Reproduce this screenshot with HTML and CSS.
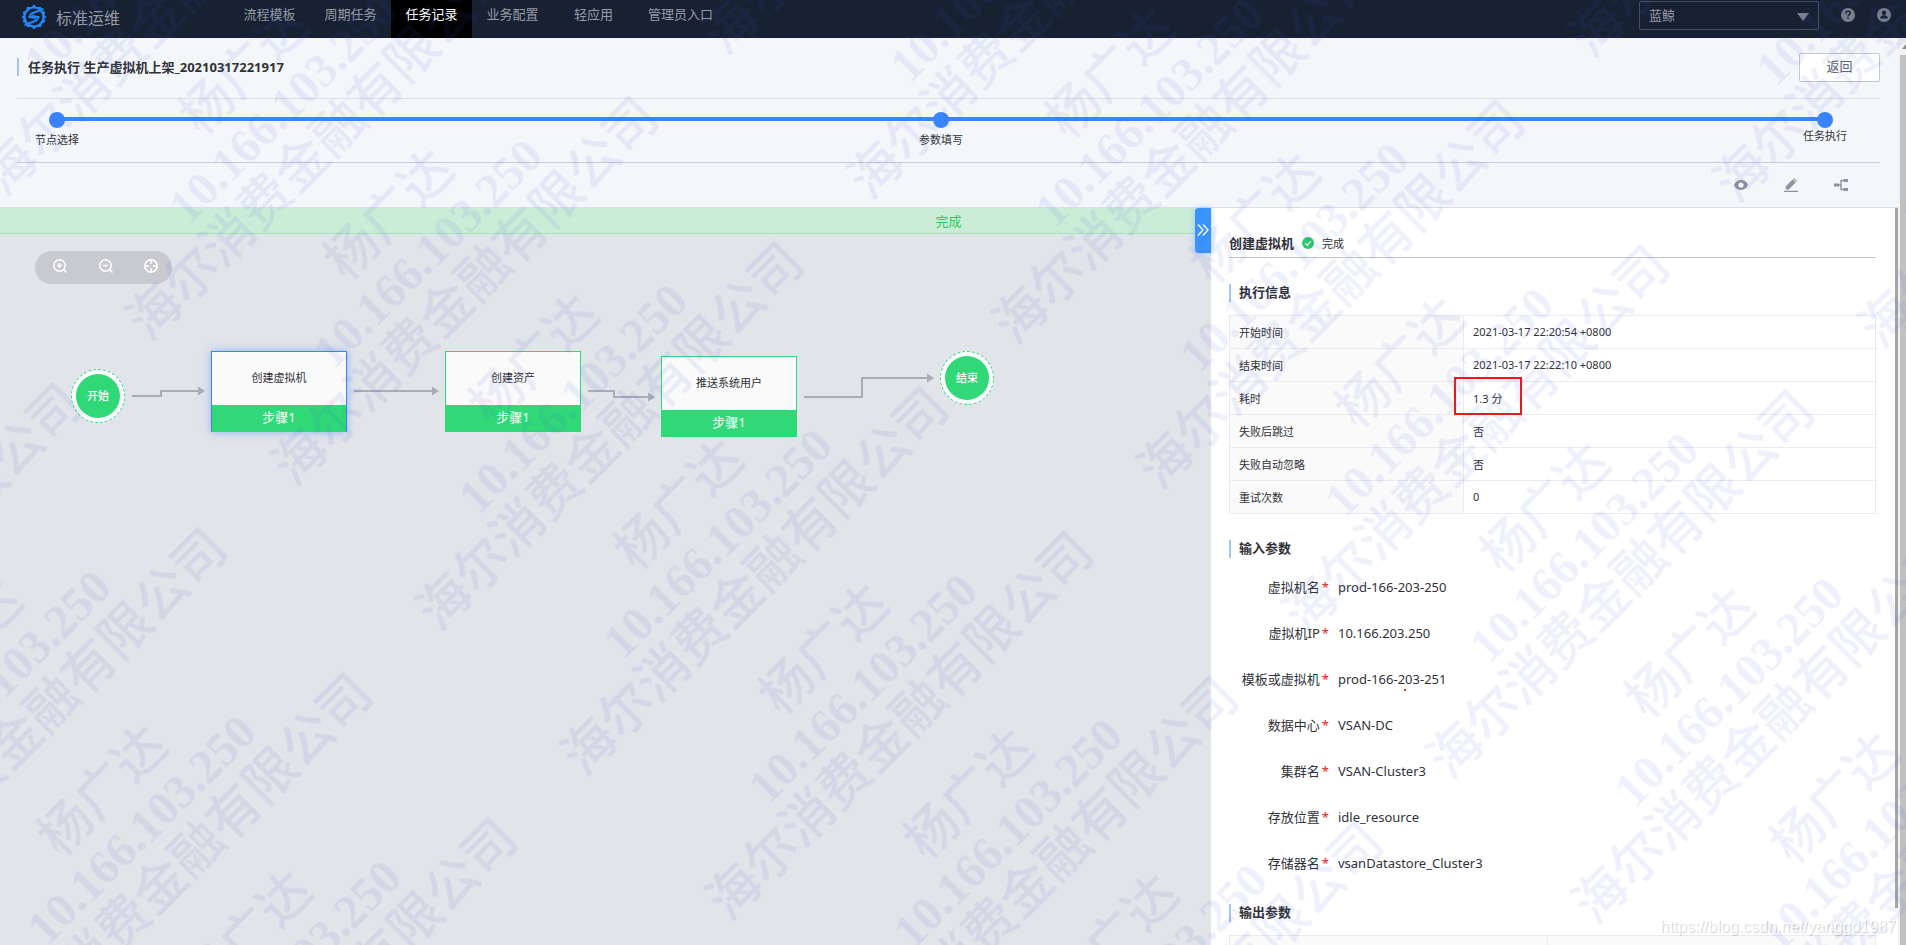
FILE: index.html
```html
<!DOCTYPE html>
<html lang="zh-CN">
<head>
<meta charset="utf-8">
<title>标准运维</title>
<link rel="stylesheet" href="styles.css">
</head>
<body>
<div class="app">
  <header class="topbar">
    <a class="brand" href="#">
      <svg class="brand-logo" viewBox="0 0 26 26" aria-hidden="true">
        <path d="M13 .5l2.600 2.600h4.400l1 3.400 3.200 1.500-.8 3.200L25.500 13l-2.100 1.800.8 3.200-3.200 1.500-1 3.400h-4.400L13 25.500l-2.600-2.600H6l-1-3.400L1.800 18l.8-3.200L.5 13l2.100-1.800L1.800 8 5 6.500l1-3.400h4.400z" fill="#2387f8"/>
        <circle cx="13" cy="13" r="8.400" fill="#182132"/>
        <path d="M22.500 5L10.500 9.500l-2.300 3.500 6 .8-1 1.400M3.500 21l12-4.500 2.300-3.500-6-.8 1-1.400" fill="none" stroke="#2387f8" stroke-width="1.900" stroke-linejoin="round"/>
      </svg>
      <span>标准运维</span>
    </a>
    <nav class="nav">
      <a href="#">流程模板</a>
      <a href="#">周期任务</a>
      <a href="#" class="is-active">任务记录</a>
      <a href="#">业务配置</a>
      <a href="#">轻应用</a>
      <a href="#">管理员入口</a>
    </nav>
    <div class="tools">
      <div class="picker">
        <select class="picker-select" aria-label="业务"><option>蓝鲸</option></select>
        <svg class="picker-arrow" viewBox="0 0 12 8" aria-hidden="true"><path d="M0 0h12L6 8z"/></svg>
      </div>
      <button class="icon-button" aria-label="帮助">
        <svg viewBox="0 0 14 14" width="14" height="14"><circle cx="7" cy="7" r="7" fill="#7b808c"/><path d="M4.900 5.400c0-3 4.300-2.800 4.300-.2C9.200 6.800 7 6.700 7 8.500M7 9.600v1.400" fill="none" stroke="#182132" stroke-width="1.500"/></svg>
      </button>
      <button class="icon-button" aria-label="用户">
        <svg viewBox="0 0 14 14" width="14" height="14"><circle cx="7" cy="7" r="7" fill="#7b808c"/><circle cx="7" cy="4.800" r="2.200" fill="#182132"/><path d="M3 10.500c0-2 2-2.800 2.800-3.200h2.400C9 7.700 11 8.500 11 10.500z" fill="#182132"/></svg>
      </button>
    </div>
  </header>

  <div class="page">
    <main class="content">
      <section class="head">
        <div class="title-row">
          <h1 class="page-title">任务执行 生产虚拟机上架_20210317221917</h1>
          <button class="back">返回</button>
        </div>
        <ol class="steps">
          <li class="step"><i class="dot"></i><span>节点选择</span></li>
          <li class="step"><i class="dot"></i><span>参数填写</span></li>
          <li class="step step-current"><i class="dot"></i><span>任务执行</span></li>
        </ol>
        <div class="actions">
          <button class="icon-button" aria-label="查看参数">
            <svg viewBox="0 0 14 12" width="14" height="12"><path fill-rule="evenodd" d="M7 1c3.600 0 6 2.500 7 5-1 2.500-3.400 5-7 5S1 8.500 0 6c1-2.500 3.400-5 7-5zm0 2.400a2.600 2.600 0 100 5.200 2.600 2.600 0 000-5.200z" fill="#8f939e"/></svg>
          </button>
          <button class="icon-button" aria-label="修改参数">
            <svg viewBox="0 0 14 14" width="14" height="14"><path d="M1.800 11.400V8.300L8.800 1.300l3 3-7 7.100zM9.500.7l.7-.7L13 2.900l-.7.8zM0 12.800h14V14H0z" fill="#8f939e"/></svg>
          </button>
          <button class="icon-button" aria-label="流程">
            <svg viewBox="0 0 14 12" width="14" height="12"><path d="M0 4.500h5v3H0zM9.500 0H14v3H9.500zM9.500 9H14v3H9.500z" fill="#8f939e"/><path d="M5 6h2M10 1.500H7v9h3" fill="none" stroke="#8f939e" stroke-width="1.400"/></svg>
          </button>
        </div>
      </section>

      <section class="work">
        <div class="stage">
          <div class="status">完成</div>
          <div class="canvas">
            <div class="zoombar">
              <button class="icon-button" aria-label="放大">
                <svg viewBox="0 0 14 14" width="14" height="14"><circle cx="6.500" cy="6.500" r="5.700"/><path d="M10.500 10.500l3 3M6.500 4v5M4 6.500h5"/></svg>
              </button>
              <button class="icon-button" aria-label="缩小">
                <svg viewBox="0 0 14 14" width="14" height="14"><circle cx="6.500" cy="6.500" r="5.700"/><path d="M10.500 10.500l3 3M4 6.500h5"/></svg>
              </button>
              <button class="icon-button" aria-label="复位">
                <svg viewBox="0 0 14 14" width="14" height="14"><circle cx="7" cy="7" r="6.200"/><path d="M7 1v4M7 9v4M1 7h4M9 7h4"/></svg>
              </button>
            </div>
            <svg class="links" aria-hidden="true">
              <defs>
                <marker id="tip" markerUnits="userSpaceOnUse" markerWidth="8" markerHeight="10" refX="1" refY="5" orient="auto"><path d="M0 .5L7 5 0 9.500z" fill="#a9adb6"/></marker>
              </defs>
              <path d="M132 162h29v-5h38"/>
              <path d="M354 157h79"/>
              <path d="M588 157h26v6h35"/>
              <path d="M804 163h58v-19h66"/>
            </svg>
            <div class="terminal node-start"><span>开始</span></div>
            <div class="task node-vm is-selected"><span class="task-name">创建虚拟机</span><span class="task-step">步骤1</span></div>
            <div class="task node-asset"><span class="task-name">创建资产</span><span class="task-step">步骤1</span></div>
            <div class="task node-user"><span class="task-name">推送系统用户</span><span class="task-step">步骤1</span></div>
            <div class="terminal node-end"><span>结束</span></div>
          </div>
        </div>

        <aside class="panel">
          <button class="collapse" aria-label="收起">
            <svg viewBox="0 0 12 12" width="12" height="12"><path d="M1 .5L6 6l-5 5.500M6 .5L11 6l-5 5.500" fill="none" stroke="#fff" stroke-width="1.300"/></svg>
          </button>
          <div class="panel-head">
            <h2>创建虚拟机</h2>
            <svg viewBox="0 0 12 12" width="12" height="12" aria-hidden="true"><circle cx="6" cy="6" r="6" fill="#2dcb6b"/><path d="M3.200 6.200l2 2 3.600-3.800" fill="none" stroke="#fff" stroke-width="1.200"/></svg>
            <span>完成</span>
          </div>

          <h3 class="section-title">执行信息</h3>
          <table class="info">
            <tr><th scope="row">开始时间</th><td>2021-03-17 22:20:54 +0800</td></tr>
            <tr><th scope="row">结束时间</th><td>2021-03-17 22:22:10 +0800</td></tr>
            <tr><th scope="row">耗时</th><td><div class="marked">1.3 分<i class="mark"></i></div></td></tr>
            <tr><th scope="row">失败后跳过</th><td>否</td></tr>
            <tr><th scope="row">失败自动忽略</th><td>否</td></tr>
            <tr><th scope="row">重试次数</th><td>0</td></tr>
          </table>

          <h3 class="section-title">输入参数</h3>
          <dl class="params">
            <dt>虚拟机名</dt><dd>prod-166-203-250</dd>
            <dt>虚拟机IP</dt><dd>10.166.203.250</dd>
            <dt>模板或虚拟机</dt><dd>prod-166-203-251<i class="speck"></i></dd>
            <dt>数据中心</dt><dd>VSAN-DC</dd>
            <dt>集群名</dt><dd>VSAN-Cluster3</dd>
            <dt>存放位置</dt><dd>idle_resource</dd>
            <dt>存储器名</dt><dd>vsanDatastore_Cluster3</dd>
          </dl>

          <h3 class="section-title">输出参数</h3>
          <table class="output"><tr><th></th><th></th></tr></table>
          <i class="panel-scroll"></i>
        </aside>
      </section>
    </main>
    <div class="scrollbar"><i class="scroll-up"></i><i class="scroll-thumb"></i></div>
  </div>
</div>

<svg class="watermark" aria-hidden="true">
  <defs>
    <pattern id="wm" patternUnits="userSpaceOnUse" x="-185" y="190" width="610" height="205" patternTransform="rotate(-45)">
      <text text-anchor="middle">
        <tspan x="315" y="50">杨广达</tspan>
        <tspan class="watermark-ip" x="315" y="103">10.166.103.250</tspan>
        <tspan x="308" y="158">海尔消费金融有限公司</tspan>
      </text>
    </pattern>
  </defs>
  <rect width="100%" height="100%" fill="url(#wm)"/>
</svg>
<div class="credit">https://blog.csdn.net/yanggd1987</div>
</body>
</html>
```
FILE: styles.css
```css
* { box-sizing: border-box; }

body {
  margin: 0;
  font-family: "Noto Sans", "Noto Sans CJK SC", sans-serif;
  font-size: 13px;
  color: #313238;
  overflow: hidden;
}

h1, h2, h3, ol, dl, dd { margin: 0; padding: 0; }
i { display: block; }

.app {
  display: flex;
  flex-direction: column;
  height: 100vh;
  overflow: hidden;
}

.icon-button {
  display: flex;
  padding: 0;
  border: 0;
  background: none;
}

/* Top bar */
.topbar {
  display: flex;
  flex: none;
  height: 38px;
  padding: 0 15px 0 21px;
  background: #182132;
}

.brand {
  display: flex;
  align-items: center;
  gap: 9px;
  width: 208px;
  height: 33px;
  color: #979ba5;
  font-size: 16px;
  text-decoration: none;
}

.brand-logo { width: 26px; height: 26px; }

.nav { display: flex; }

.nav a {
  min-width: 81px;
  padding: 0 14px;
  color: #979ba5;
  line-height: 29px;
  text-align: center;
  text-decoration: none;
}

.nav .is-active {
  background: #000;
  color: #fff;
}

.tools {
  display: flex;
  align-items: center;
  gap: 22px;
  height: 30px;
  margin-left: auto;
}

.picker { position: relative; }

.picker-select {
  appearance: none;
  width: 180px;
  height: 29px;
  padding: 0 9px;
  border: 1px solid #445060;
  border-radius: 2px;
  background: transparent;
  color: #979ba5;
  font: inherit;
}

.picker-arrow {
  position: absolute;
  top: 12px;
  right: 10px;
  width: 12px;
  height: 8px;
  fill: #7b808c;
}

/* Page */
.page {
  display: flex;
  flex: 1;
  min-height: 0;
}

.content {
  display: flex;
  flex: 1;
  flex-direction: column;
  min-width: 0;
}

.scrollbar {
  display: flex;
  flex-direction: column;
  width: 8px;
  padding: 6px 0 0 2px;
  background: #f1f1f1;
}

.scroll-up {
  height: 5px;
  margin: 0 0 6px 2px;
  background: #8a8a8a;
  clip-path: polygon(100% 0, 100% 100%, 0 100%);
}

.scroll-thumb { flex: 1; background: #c1c1c1; }

.head {
  flex: none;
  padding: 0 18px 0 17px;
  border-bottom: 1px solid #dcdee5;
  background: #f4f7fa;
}

.title-row {
  display: flex;
  align-items: center;
  justify-content: space-between;
  height: 61px;
  padding-bottom: 2px;
  border-bottom: 1px solid #dcdee5;
}

.page-title, .section-title {
  padding-left: 9px;
  border-left: 2px solid #a3c5fd;
  font-size: 13px;
  line-height: 18px;
}

.back {
  width: 81px;
  height: 29px;
  padding: 0 0 3px;
  border: 1px solid #c4c6cc;
  border-radius: 2px;
  background: #fff;
  color: #63656e;
  font: inherit;
}

.steps {
  position: relative;
  display: flex;
  justify-content: space-between;
  height: 64px;
  padding: 13px 18px 0 18px;
  border-bottom: 1px solid #c8cad8;
  list-style: none;
}

.steps::before {
  content: "";
  position: absolute;
  top: 18px;
  right: 55px;
  left: 40px;
  height: 4px;
  background: #3a84ff;
}

.step {
  position: relative;
  display: flex;
  flex-direction: column;
  align-items: center;
  gap: 4px;
  font-size: 11px;
  line-height: 16px;
}

.step-current { gap: 0; margin-right: 15px; }

.dot {
  width: 16px;
  height: 16px;
  border-radius: 50%;
  background: #3a84ff;
}

.actions {
  display: flex;
  align-items: center;
  justify-content: flex-end;
  gap: 36px;
  height: 44px;
  padding-right: 32px;
}

/* Flow */
.work {
  display: flex;
  flex: 1;
  min-height: 0;
}

.stage {
  display: flex;
  flex: 1;
  flex-direction: column;
  min-width: 0;
}

.status {
  height: 26px;
  padding-left: 686px;
  border-bottom: 1px solid #a9dfbb;
  background: #cbedd8;
  color: #30c95f;
  line-height: 26px;
  text-align: center;
}

.canvas {
  position: relative;
  flex: 1;
  background: #e1e4e9;
}

.zoombar {
  position: absolute;
  top: 17px;
  left: 35px;
  display: flex;
  align-items: center;
  justify-content: space-between;
  width: 137px;
  height: 33px;
  padding: 0 14px 4px 18px;
  border-radius: 17px;
  background: #c8cacf;
}

.zoombar svg {
  fill: none;
  stroke: #fff;
  stroke-width: 1.5;
}

.links {
  position: absolute;
  top: 0;
  left: 0;
  width: 100%;
  height: 100%;
}

.links > path {
  fill: none;
  stroke: #a9adb6;
  stroke-width: 2;
  marker-end: url(#tip);
}

.terminal {
  position: absolute;
  width: 54px;
  height: 54px;
  padding: 4px;
  border: 1px dashed #30d878;
  border-radius: 50%;
  background: #fafbfd;
  color: #fff;
  font-size: 11px;
  font-weight: 500;
  line-height: 44px;
  text-align: center;
}

.terminal span {
  display: block;
  border-radius: 50%;
  background: #30d878;
}

.task {
  position: absolute;
  display: flex;
  flex-direction: column;
  width: 136px;
  height: 81px;
  border: 1px solid #30d878;
  background: #fafafa;
  text-align: center;
}

.task-name { flex: 1; font-size: 11px; line-height: 52px; }

.task-step {
  height: 26px;
  background: #30d878;
  color: #fff;
  line-height: 25px;
}

.is-selected {
  border-color: #3a84ff #3a84ff #30d878;
  box-shadow: 0 0 8px rgba(58, 132, 255, .5);
}

.node-start { top: 135px; left: 71px; }
.node-vm { top: 117px; left: 211px; }
.node-asset { top: 117px; left: 445px; }
.node-user { top: 122px; left: 661px; }
.node-end { top: 117px; left: 940px; }

/* Detail panel */
.panel {
  position: relative;
  flex: none;
  width: 687px;
  padding: 27px 22px 0 18px;
  background: #fff;
}

.collapse {
  position: absolute;
  top: 0;
  left: -16px;
  display: flex;
  align-items: center;
  justify-content: center;
  width: 16px;
  height: 45px;
  padding: 0 0 2px;
  border: 0;
  border-radius: 4px 0 0 4px;
  background: #3a94ff;
  box-shadow: 0 0 6px rgba(58, 148, 255, .4);
}

.panel-head {
  display: flex;
  align-items: center;
  gap: 8px;
  height: 23px;
  padding-bottom: 6px;
  border-bottom: 1px solid #c4c6cc;
  font-size: 11px;
}

.panel-head h2 { font-size: 13px; line-height: 16px; }

.section-title {
  margin-top: 26px;
  padding-left: 8px;
  line-height: 16px;
  padding-bottom: 2px;
}

.info, .output {
  width: 100%;
  margin-top: 13px;
  border-collapse: collapse;
  table-layout: fixed;
  font-size: 11px;
}

.info th, .info td, .output th {
  height: 33px;
  padding: 0 9px 1px;
  border: 1px solid #e9eaf2;
  font-weight: 400;
  text-align: left;
}

.info th { width: 234px; background: #fafafa; }
.output th { background: #fafafa; }
.output th:first-child { width: 318px; }

.marked { position: relative; }

.mark {
  position: absolute;
  top: -13px;
  left: -19px;
  width: 68px;
  height: 38px;
  border: 2px solid #f81414;
}

.params {
  display: grid;
  grid-template-columns: 100px 1fr;
  grid-auto-rows: 46px;
  gap: 0 9px;
  margin-top: 6px;
  line-height: 46px;
}

.params dt { text-align: right; white-space: nowrap; }

.params dt::after {
  content: "*";
  margin-left: 2px;
  color: #ea1a1a;
}

.params dd { position: relative; }

.speck {
  position: absolute;
  top: 33px;
  left: 66px;
  width: 2px;
  height: 2px;
  background: #e33;
}

.params + .section-title { margin-top: 18px; }

.panel-scroll {
  position: absolute;
  top: 0;
  right: 0;
  width: 3px;
  height: 95%;
  background: #a5a5a5;
}

/* Overlays */
.watermark {
  position: fixed;
  inset: 0;
  width: 100%;
  height: 100%;
  pointer-events: none;
}

.watermark text {
  fill: rgba(60, 80, 205, .085);
  font-family: "Liberation Serif", "Noto Sans CJK SC", serif;
  font-size: 52px;
  font-weight: 500;
}

.watermark .watermark-ip {
  font-size: 48px;
  font-weight: 700;
}

.credit {
  position: fixed;
  right: 10px;
  bottom: 8px;
  color: rgba(255, 255, 255, .8);
  font-family: "Liberation Sans", sans-serif;
  font-size: 16px;
  line-height: 20px;
  text-shadow: 1px 1px 1px rgba(0, 0, 0, .18);
  pointer-events: none;
}
```
